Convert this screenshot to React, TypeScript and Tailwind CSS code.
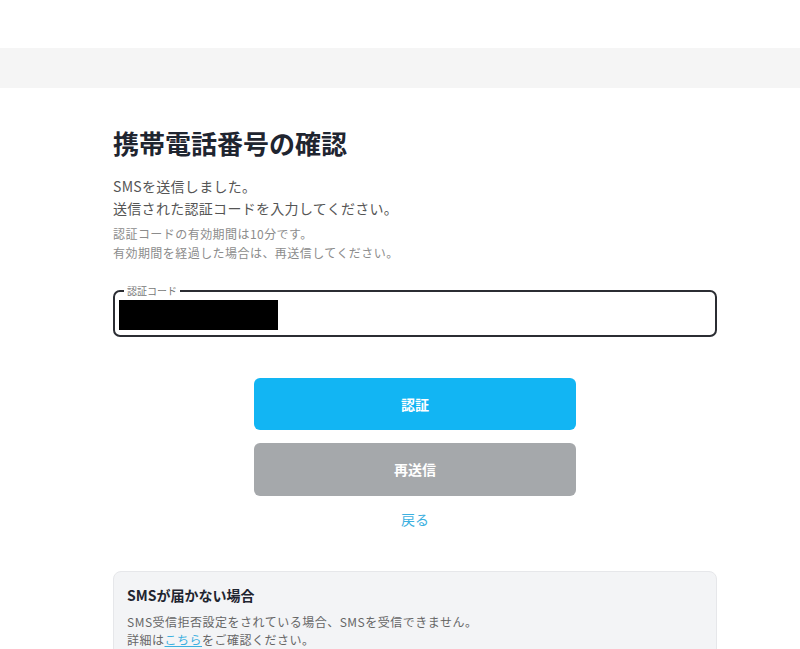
const font = { fontFamily: '"Noto Sans CJK JP", "Noto Sans", sans-serif' };

function CodeField() {
  return (
    <div className="relative mt-[28px] flex h-[47px] items-center rounded-[7px] border-2 border-[#2b2d33] px-[4px] pt-[2px]">
      <span className="absolute -top-[8px] left-[9px] bg-white px-[3px] text-[10px] leading-[14px] text-[#777]">
        認証コード
      </span>
      <div className="h-[30px] w-[159px] bg-black" />
    </div>
  );
}

export default function App() {
  return (
    <div className="min-h-[649px] bg-white text-[#555]" style={font}>
      <div className="h-12" />
      <div className="h-10 bg-[#f5f5f5]" />
      <main className="ml-[113px] w-[604px]">
        <h1 className="mt-[38px] text-[26px] font-bold leading-[34px] text-[#1f2530]">
          携帯電話番号の確認
        </h1>
        <p className="mt-[15px] text-[14px] leading-[22px] tracking-[0.3px]">
          SMSを送信しました。
          <br />
          送信された認証コードを入力してください。
        </p>
        <p className="mt-[5px] text-[12px] leading-[19px] tracking-[0.45px] text-[#8c8c8c]">
          認証コードの有効期間は10分です。
          <br />
          有効期間を経過した場合は、再送信してください。
        </p>

        <CodeField />

        <div className="mt-[41px] flex flex-col items-center gap-[13px]">
          <button className="h-[52px] w-[322px] rounded-[6px] bg-[#12b5f3] text-[14px] font-bold text-white">
            認証
          </button>
          <button className="h-[53px] w-[322px] rounded-[6px] bg-[#a5a8ab] text-[14px] font-bold text-white">
            再送信
          </button>
          <a className="text-[14px] leading-[20px] text-[#3cb0e0]">戻る</a>
        </div>

        <section className="mt-[42px] rounded-lg border border-[#e6e7ea] bg-[#f3f4f6] px-[13px] pt-[13px] pb-4">
          <h2 className="text-[14px] font-bold leading-[20px] text-[#1f2530]">SMSが届かない場合</h2>
          <p className="mt-[8px] text-[12px] leading-[18px] tracking-[0.5px] text-[#666]">
            SMS受信拒否設定をされている場合、SMSを受信できません。
            <br />
            詳細は<a className="text-[#3cb0e0] underline">こちら</a>をご確認ください。
          </p>
        </section>
      </main>
    </div>
  );
}
